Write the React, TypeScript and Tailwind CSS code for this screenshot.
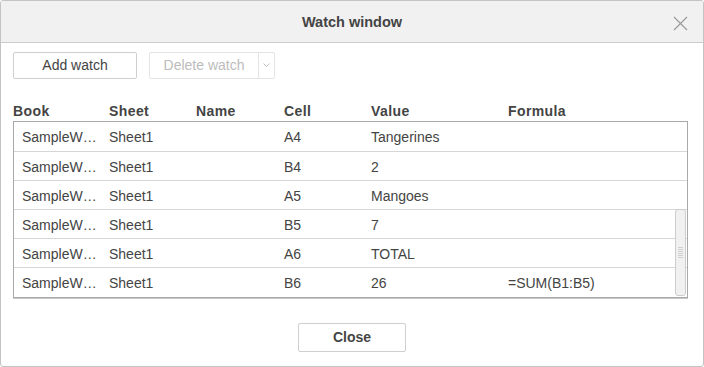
import React from 'react';

const rows = [
  { book: 'SampleW…', sheet: 'Sheet1', name: '', cell: 'A4', value: 'Tangerines', formula: '' },
  { book: 'SampleW…', sheet: 'Sheet1', name: '', cell: 'B4', value: '2', formula: '' },
  { book: 'SampleW…', sheet: 'Sheet1', name: '', cell: 'A5', value: 'Mangoes', formula: '' },
  { book: 'SampleW…', sheet: 'Sheet1', name: '', cell: 'B5', value: '7', formula: '' },
  { book: 'SampleW…', sheet: 'Sheet1', name: '', cell: 'A6', value: 'TOTAL', formula: '' },
  { book: 'SampleW…', sheet: 'Sheet1', name: '', cell: 'B6', value: '26', formula: '=SUM(B1:B5)' },
];

export default function App() {
  return (
    <div
      className="w-[704px] h-[367px] bg-white border border-[#c4c4c4] rounded-[3px] flex flex-col overflow-hidden text-[14px] text-[#444]"
      style={{ fontFamily: '"Liberation Sans", Arial, sans-serif' }}
    >
      {/* header */}
      <div className="relative h-[42px] shrink-0 bg-[#f1f1f1] border-b border-[#cbcbcb] flex items-center justify-center pt-[3px]">
        <span className="font-bold text-[14.5px] text-[#444]">Watch window</span>
        <button className="absolute right-[15px] top-[14px] w-[16px] h-[16px] flex items-center justify-center">
          <svg width="15" height="15" viewBox="0 0 15 15">
            <path d="M1 1 L14 14 M14 1 L1 14" stroke="#9a9a9a" strokeWidth="1.2" fill="none" />
          </svg>
        </button>
      </div>

      <div className="px-[12px] flex flex-col">
        {/* toolbar */}
        <div className="flex gap-[12px] mt-[9px]">
          <button className="w-[124px] h-[27px] border border-[#cfcfcf] rounded-[2px] bg-white text-[14px] text-[#444]">
            Add watch
          </button>
          <div className="flex h-[27px] border border-[#e3e3e3] rounded-[2px] text-[#bcbcbc]">
            <span className="w-[108px] flex items-center justify-center">Delete watch</span>
            <span className="w-[16px] border-l border-[#e3e3e3] flex items-center justify-center">
              <svg width="7" height="5" viewBox="0 0 7 5">
                <path d="M0.5 0.5 L3.5 3.5 L6.5 0.5" stroke="#c2c2c2" strokeWidth="1" fill="none" />
              </svg>
            </span>
          </div>
        </div>

        {/* column headers */}
        <div className="grid grid-cols-[96px_87px_88px_87px_137px_1fr] mt-[22px] h-[20px] items-start font-bold text-[14px] tracking-[0.4px] text-[#444]">
          <span>Book</span>
          <span>Sheet</span>
          <span>Name</span>
          <span>Cell</span>
          <span>Value</span>
          <span>Formula</span>
        </div>

        {/* table */}
        <div className="relative w-[675px] border border-[#a9a9a9] shadow-[0_1px_0_#c8c8c8]">
          {rows.map((r, i) => (
            <div
              key={i}
              className={`grid grid-cols-[95px_87px_88px_87px_137px_1fr] items-center pt-[2px] ${
                i < rows.length - 1 ? 'border-b border-[#d6d6d6]' : ''
              } ${i === 0 ? 'h-[30px]' : 'h-[29px]'}`}
            >
              <span className="pl-[8px]">{r.book}</span>
              <span>{r.sheet}</span>
              <span>{r.name}</span>
              <span>{r.cell}</span>
              <span>{r.value}</span>
              <span>{r.formula}</span>
            </div>
          ))}
          {/* scrollbar */}
          <div className="absolute right-[1px] bottom-[1px] w-[11px] h-[87px] bg-[#f1f1f1] border border-[#cdcdcd] rounded-[3px] flex flex-col items-center justify-center gap-[1px]">
            <div className="w-[5px] h-px bg-[#d0d0d0]" />
            <div className="w-[5px] h-px bg-[#d0d0d0]" />
            <div className="w-[5px] h-px bg-[#d0d0d0]" />
            <div className="w-[5px] h-px bg-[#d0d0d0]" />
            <div className="w-[5px] h-px bg-[#d0d0d0]" />
            <div className="w-[5px] h-px bg-[#d0d0d0]" />
          </div>
        </div>

        {/* footer */}
        <div className="flex justify-center mt-[25px]">
          <button className="w-[108px] h-[29px] border border-[#cfcfcf] rounded-[2px] bg-white font-bold text-[14px] text-[#444]">
            Close
          </button>
        </div>
      </div>
    </div>
  );
}
